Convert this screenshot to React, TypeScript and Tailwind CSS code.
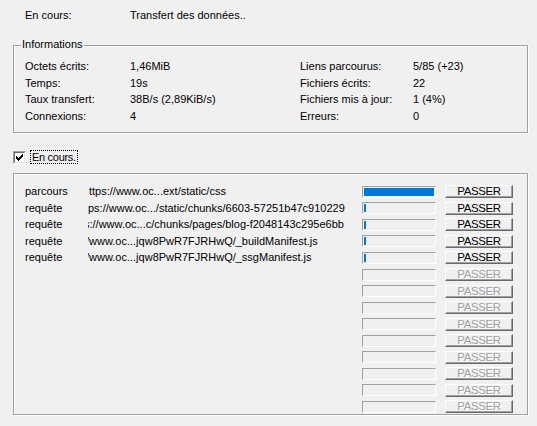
import React from "react";

const rows = [
  { label: "parcours", url: "ttps://www.oc...ext/static/css", shift: 1, fill: "full" },
  { label: "requête", url: "ps://www.oc.../static/chunks/6603-57251b47c910229", shift: 0, fill: "min" },
  { label: "requête", url: "s://www.oc...c/chunks/pages/blog-f2048143c295e6bb", shift: -4, fill: "min" },
  { label: "requête", url: "/www.oc...jqw8PwR7FJRHwQ/_buildManifest.js", shift: -2, fill: "min" },
  { label: "requête", url: "/www.oc...jqw8PwR7FJRHwQ/_ssgManifest.js", shift: -2, fill: "min" },
];

const CHECK = [
  "......x",
  ".....xx",
  "x...xxx",
  "xx.xxx.",
  "xxxxx..",
  ".xxx...",
  "..x....",
];

function CheckMark() {
  const rects: React.ReactElement[] = [];
  CHECK.forEach((line, y) =>
    line.split("").forEach((c, x) => {
      if (c === "x") rects.push(<rect key={`${x}-${y}`} x={x} y={y} width={1} height={1} fill="#000" />);
    })
  );
  return (
    <svg width="7" height="7" viewBox="0 0 7 7" shapeRendering="crispEdges">
      {rects}
    </svg>
  );
}

function Bar({ fill }: { fill?: string }) {
  return (
    <div className="w-[74px] h-[12px] border border-t-[#a0a0a0] border-l-[#a0a0a0] border-r-white border-b-white bg-[#f0f0f0] p-[1px] flex">
      {fill === "full" && <div className="flex-1 bg-[#0078d7]" />}
      {fill === "min" && <div className="w-[2px] bg-[#0078d7]" />}
    </div>
  );
}

function Btn({ disabled }: { disabled?: boolean }) {
  return (
    <div className="w-[68px] h-[13px] border border-t-white border-l-white border-r-[#696969] border-b-[#696969] shadow-[inset_-1px_-1px_0_#a0a0a0] bg-[#f0f0f0] flex items-center justify-center">
      <span
        className={
          disabled
            ? "text-[11.5px] leading-[11px] tracking-[-0.4px] text-[#a0a0a0] [text-shadow:1px_1px_0_#fff]"
            : "text-[11.5px] leading-[11px] tracking-[-0.4px] text-black"
        }
      >
        PASSER
      </span>
    </div>
  );
}

export default function App() {
  const all = Array.from({ length: 14 }, (_, i) => rows[i]);
  return (
    <div className="w-[537px] h-[426px] bg-[#f0f0f0] overflow-hidden text-[11px] leading-[13px] text-black font-['Liberation_Sans',Arial,sans-serif]">
      <div className="mt-[9px] h-[13px] flex pl-[25px]">
        <div className="w-[105px]">En cours:</div>
        <div>Transfert des données..</div>
      </div>

      <div className="relative mt-[23px] ml-[13px] w-[515px] h-[88px] border border-[#a0a0a0] shadow-[inset_1px_1px_0_#fff,1px_1px_0_#fff]">
        <span className="absolute left-[7px] top-[-8px] px-[1px] bg-[#f0f0f0] leading-[13px]">Informations</span>
        <div className="pt-[12.5px] pl-[11px] grid grid-cols-[105px_170px_113px_1fr] auto-rows-[16.6px] items-center">
          <div>Octets écrits:</div>
          <div>1,46MiB</div>
          <div>Liens parcourus:</div>
          <div>5/85 (+23)</div>
          <div>Temps:</div>
          <div>19s</div>
          <div>Fichiers écrits:</div>
          <div>22</div>
          <div>Taux transfert:</div>
          <div>38B/s (2,89KiB/s)</div>
          <div>Fichiers mis à jour:</div>
          <div>1 (4%)</div>
          <div>Connexions:</div>
          <div>4</div>
          <div>Erreurs:</div>
          <div>0</div>
        </div>
      </div>

      <div className="mt-[17px] ml-[13px] h-[14px] flex items-start">
        <div className="mt-[1px] w-[13px] h-[13px] border border-t-[#a0a0a0] border-l-[#a0a0a0] border-r-white border-b-white">
          <div className="w-full h-full border border-t-[#696969] border-l-[#696969] border-r-[#e3e3e3] border-b-[#e3e3e3] bg-white flex items-center justify-center">
            <CheckMark />
          </div>
        </div>
        <div className="ml-[4px] h-[14px] border border-dotted border-black px-[1px] leading-[12px] whitespace-nowrap tracking-[-0.3px]">
          En cours.
        </div>
      </div>

      <div className="mt-[9px] ml-[13px] w-[515px] h-[242px] border border-[#a0a0a0] shadow-[inset_1px_1px_0_#fff,1px_1px_0_#fff]">
        <div className="pt-[9.5px] pl-[11px]">
          {all.map((r, i) => (
            <div key={i} className="h-[16.55px] flex items-center">
              <div className="w-[63px]">{r ? r.label : ""}</div>
              <div className="w-[266px] overflow-hidden whitespace-nowrap">
                {r && (
                  <span className="inline-block" style={{ marginLeft: r.shift }}>
                    {r.url}
                  </span>
                )}
              </div>
              <div className="ml-[8px]">
                <Bar fill={r ? r.fill : undefined} />
              </div>
              <div className="ml-[9px]">
                <Btn disabled={!r} />
              </div>
            </div>
          ))}
        </div>
      </div>
    </div>
  );
}
